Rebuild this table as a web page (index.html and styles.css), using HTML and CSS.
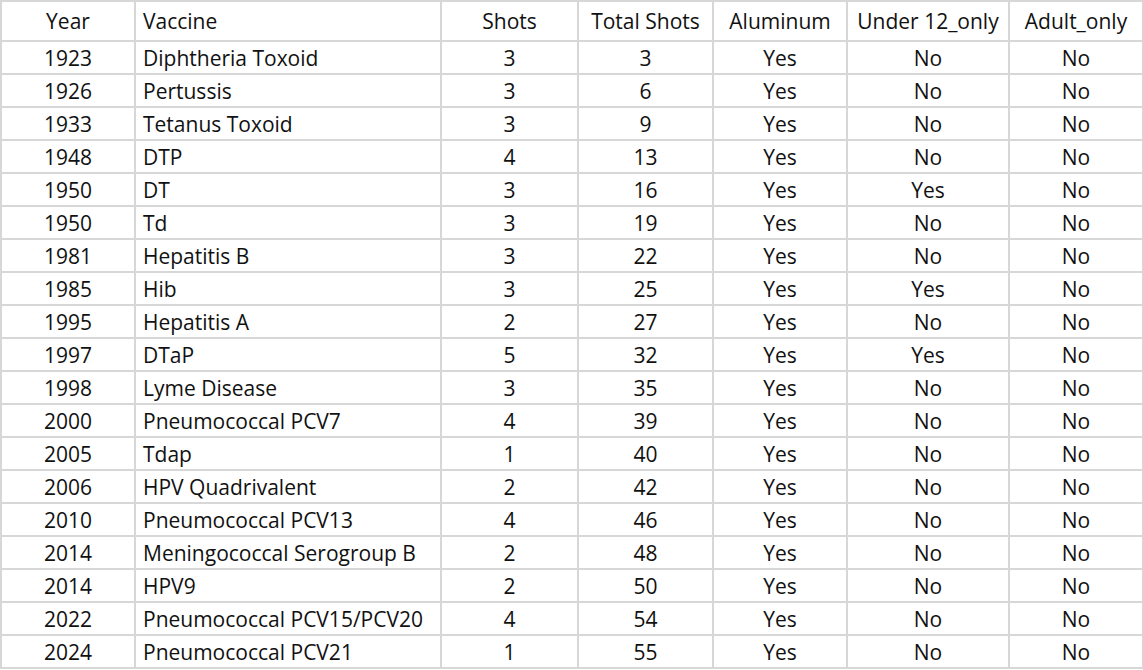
FILE: index.html
```html
<!DOCTYPE html>
<html>
<head>
<meta charset="utf-8">
<link rel="stylesheet" href="styles.css">
</head>
<body>
<table class="sheet">
  <colgroup>
    <col class="c-year"><col class="c-vac"><col class="c-shots"><col class="c-total"><col class="c-al"><col class="c-u12"><col class="c-adult">
  </colgroup>
  <thead>
    <tr class="head"><th>Year</th><th class="left">Vaccine</th><th>Shots</th><th>Total Shots</th><th>Aluminum</th><th>Under 12_only</th><th>Adult_only</th></tr>
  </thead>
  <tbody>
    <tr><td>1923</td><td class="left">Diphtheria Toxoid</td><td>3</td><td>3</td><td>Yes</td><td>No</td><td>No</td></tr>
    <tr><td>1926</td><td class="left">Pertussis</td><td>3</td><td>6</td><td>Yes</td><td>No</td><td>No</td></tr>
    <tr><td>1933</td><td class="left">Tetanus Toxoid</td><td>3</td><td>9</td><td>Yes</td><td>No</td><td>No</td></tr>
    <tr><td>1948</td><td class="left">DTP</td><td>4</td><td>13</td><td>Yes</td><td>No</td><td>No</td></tr>
    <tr><td>1950</td><td class="left">DT</td><td>3</td><td>16</td><td>Yes</td><td>Yes</td><td>No</td></tr>
    <tr><td>1950</td><td class="left">Td</td><td>3</td><td>19</td><td>Yes</td><td>No</td><td>No</td></tr>
    <tr><td>1981</td><td class="left">Hepatitis B</td><td>3</td><td>22</td><td>Yes</td><td>No</td><td>No</td></tr>
    <tr><td>1985</td><td class="left">Hib</td><td>3</td><td>25</td><td>Yes</td><td>Yes</td><td>No</td></tr>
    <tr><td>1995</td><td class="left">Hepatitis A</td><td>2</td><td>27</td><td>Yes</td><td>No</td><td>No</td></tr>
    <tr><td>1997</td><td class="left">DTaP</td><td>5</td><td>32</td><td>Yes</td><td>Yes</td><td>No</td></tr>
    <tr><td>1998</td><td class="left">Lyme Disease</td><td>3</td><td>35</td><td>Yes</td><td>No</td><td>No</td></tr>
    <tr><td>2000</td><td class="left">Pneumococcal PCV7</td><td>4</td><td>39</td><td>Yes</td><td>No</td><td>No</td></tr>
    <tr><td>2005</td><td class="left">Tdap</td><td>1</td><td>40</td><td>Yes</td><td>No</td><td>No</td></tr>
    <tr><td>2006</td><td class="left">HPV Quadrivalent</td><td>2</td><td>42</td><td>Yes</td><td>No</td><td>No</td></tr>
    <tr><td>2010</td><td class="left">Pneumococcal PCV13</td><td>4</td><td>46</td><td>Yes</td><td>No</td><td>No</td></tr>
    <tr><td>2014</td><td class="left">Meningococcal Serogroup B</td><td>2</td><td>48</td><td>Yes</td><td>No</td><td>No</td></tr>
    <tr><td>2014</td><td class="left">HPV9</td><td>2</td><td>50</td><td>Yes</td><td>No</td><td>No</td></tr>
    <tr><td>2022</td><td class="left">Pneumococcal PCV15/PCV20</td><td>4</td><td>54</td><td>Yes</td><td>No</td><td>No</td></tr>
    <tr><td>2024</td><td class="left">Pneumococcal PCV21</td><td>1</td><td>55</td><td>Yes</td><td>No</td><td>No</td></tr>
  </tbody>
</table>
</body>
</html>
```

FILE: styles.css
```css
html, body {
  margin: 0;
  padding: 0;
  background: #ffffff;
}

.sheet {
  border-collapse: collapse;
  table-layout: fixed;
  width: 1142px;
  font-family: "Open Sans", Lato, sans-serif;
  font-size: 21px;
  color: #111111;
}

.c-year { width: 134px; }
.c-vac { width: 306px; }
.c-shots { width: 137px; }
.c-total { width: 135px; }
.c-al { width: 134px; }
.c-u12 { width: 162px; }
.c-adult { width: 134px; }

.sheet th,
.sheet td {
  border: 2px solid #d7d7d7;
  padding: 0;
  line-height: 24px;
  text-align: center;
  vertical-align: middle;
  font-weight: normal;
  white-space: nowrap;
  overflow: hidden;
}

.sheet tr { height: 33px; }
.sheet tr.head { height: 40px; }

.sheet .left {
  text-align: left;
  padding-left: 7px;
}
```
